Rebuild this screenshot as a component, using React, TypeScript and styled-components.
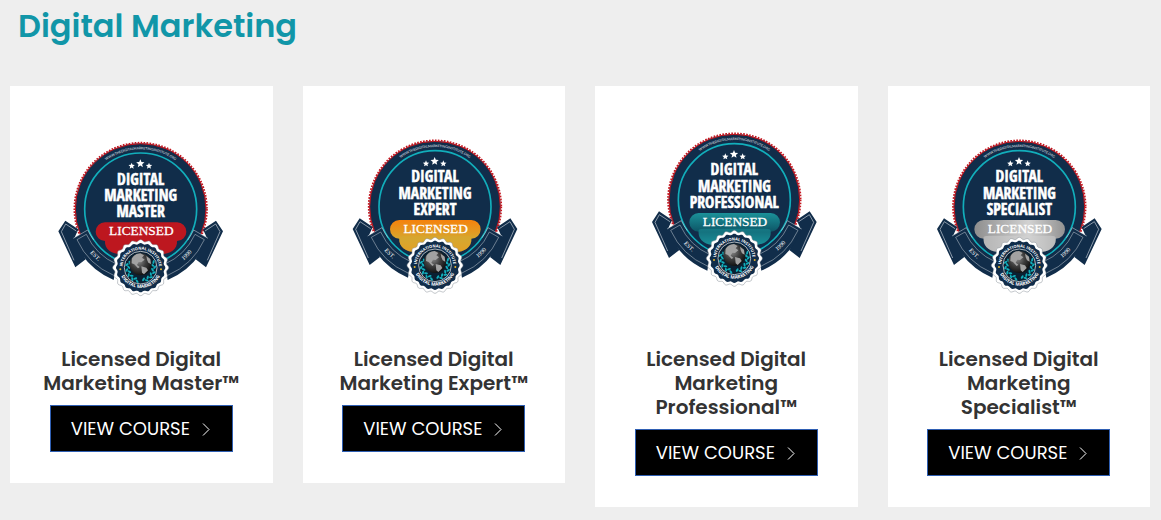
import React, { useId } from 'react';
import styled, { createGlobalStyle } from 'styled-components';

const GlobalStyle = createGlobalStyle`
  *, *::before, *::after { box-sizing: border-box; }
  body {
    margin: 0;
    background: #eeeeee;
    font-family: Poppins, Inter, sans-serif;
    color: #333333;
  }
`;

const Page = styled.main`
  padding: 6px 11px 13px 10px;
`;

const Heading = styled.h1`
  margin: 0 0 40px;
  padding: 0 8px;
  font-size: 32px;
  line-height: 40px;
  font-weight: 600;
  color: #1196a8;
`;

const CourseGrid = styled.div`
  display: grid;
  grid-template-columns: repeat(4, minmax(0, 1fr));
  align-items: start;
  gap: 30px;
`;

const Card = styled.article`
  display: flex;
  flex-direction: column;
  align-items: center;
  padding: 20px 20px 31px;
  background: #ffffff;
`;

const CardTitle = styled.h2`
  margin: 20px 0 10px;
  font-size: 20px;
  line-height: 24px;
  font-weight: 600;
  text-align: center;
`;

const CourseLink = styled.a`
  display: flex;
  align-items: center;
  justify-content: space-between;
  width: 183px;
  height: 47px;
  padding: 0 22px 0 20px;
  border: 1px solid #2f5fb3;
  background: #000000;
  color: #ffffff;
  font-size: 18px;
  line-height: 24px;
  white-space: nowrap;
  text-decoration: none;
`;

const BadgeArt = styled.svg`
  display: block;
  width: 222px;
  height: 221px;
`;

const NAVY = '#112d4a';
const TEAL = '#12aebb';

type Tone = 'red' | 'gold' | 'teal' | 'silver';

const tones: Record<Tone, [string, string, string]> = {
  red: ['#bd171f', '#bd171f', '#bd171f'],
  gold: ['#f5820c', '#d6a72f', '#f09a1c'],
  teal: ['#1b9199', '#0d5465', '#178e98'],
  silver: ['#8e8e8e', '#d2d2d2', '#929292'],
};

function scallop(cx: number, cy: number, r: number, depth: number, count: number) {
  const points: string[] = [];
  const steps = count * 8;
  for (let i = 0; i < steps; i += 1) {
    const a = (i / steps) * Math.PI * 2;
    const rr = r + depth * Math.cos(a * count);
    points.push(`${(cx + rr * Math.sin(a)).toFixed(1)} ${(cy - rr * Math.cos(a)).toFixed(1)}`);
  }
  return `M${points.join('L')}Z`;
}

function star(cx: number, cy: number, r: number) {
  return Array.from({ length: 10 }, (_, i) => {
    const rr = i % 2 ? r * 0.45 : r;
    const a = (i * Math.PI) / 5;
    return `${(cx + rr * Math.sin(a)).toFixed(1)},${(cy - rr * Math.cos(a)).toFixed(1)}`;
  }).join(' ');
}

const leaves = [20, 42, 64, 86, 108];

function Ribbon() {
  return (
    <g>
      <path d="M45 272 84 298 72 325 106 388 75 412 24 304Z" fill={NAVY} />
      <path d="M78 303 46 282 33 305 71 391" fill="none" stroke="#c9d0d9" strokeWidth="2" />
      <path d="M69 325 112 300A171 171 0 0 0 200 393L190 450A224 224 0 0 1 69 325Z" fill={NAVY} />
      <path d="M69 325 112 300A171 171 0 0 0 130 330" fill="none" stroke="#dfe4ea" strokeWidth="1.5" />
      <path d="M200 403A182 182 0 0 1 108 313L80 329A212 212 0 0 0 190 436" fill="none" stroke="#c9d0d9" strokeWidth="1.5" />
    </g>
  );
}

function Badge({ level, tone, shift }: { level: string; tone: Tone; shift: [number, number] }) {
  const id = useId();
  const [edge, mid, end] = tones[tone];
  return (
    <BadgeArt
      viewBox={`${-61 - shift[0]} ${-72 - shift[1]} 666 663`}
      role="img"
      aria-label={`Digital Marketing ${level} licensed badge`}
    >
      <defs>
        <linearGradient id={`${id}b`} x1="0" y1="0" x2={tone === 'silver' ? '1' : '0'} y2={tone === 'silver' ? '0' : '1'}>
          <stop offset="0" stopColor={edge} />
          <stop offset="0.6" stopColor={mid} />
          <stop offset="1" stopColor={end} />
        </linearGradient>
        <radialGradient id={`${id}g`} cx="0.4" cy="0.35" r="0.7">
          <stop offset="0" stopColor="#8c8c8c" />
          <stop offset="0.5" stopColor="#3d3d3d" />
          <stop offset="1" stopColor="#0c0c0c" />
        </radialGradient>
        <path id={`${id}u`} d="M92 237A179 179 0 0 1 450 237" />
        <path id={`${id}t`} d="M216 414A55 55 0 0 1 326 414" />
        <path id={`${id}m`} d="M206 409A65 65 0 0 0 336 409" />
        <path id={`${id}r`} d="M70 237A201 201 0 0 0 472 237" />
      </defs>

      <circle cx="271" cy="237" r="197" fill={NAVY} />
      <circle cx="271" cy="237" r="196" fill="none" stroke="#c4161f" strokeWidth="3" />
      <circle cx="271" cy="237" r="199" fill="none" stroke="#c4161f" strokeWidth="5" strokeDasharray="5 4" />
      <circle cx="271" cy="237" r="168" fill="none" stroke={TEAL} strokeWidth="5" />
      <text fontFamily="Lato, sans-serif" fontSize="10" fill="#e5eaf0" textAnchor="middle">
        <textPath href={`#${id}u`} startOffset="50%">WWW.THEDIGITALMARKETINGINSTITUTE.ORG</textPath>
      </text>

      <g fill="#ffffff">
        <polygon points={star(244, 108, 10)} />
        <polygon points={star(270, 101, 13)} />
        <polygon points={star(296, 108, 10)} />
      </g>
      <g
        fontFamily="'Open Sans Condensed', 'Open Sans', sans-serif"
        fontWeight="700"
        fontSize="47"
        fill="#ffffff"
        stroke="#ffffff"
        strokeWidth="1.5"
        textAnchor="middle"
      >
        <text x="271" y="164">DIGITAL</text>
        <text x="271" y="213">MARKETING</text>
        <text x="271" y="262">{level.toUpperCase()}</text>
      </g>

      <path
        d="M164 277H380A28 28 0 0 1 380 333C382 357 360 373 330 373H214C184 373 162 357 164 333A28 28 0 0 1 164 277Z"
        fill={`url(#${id}b)`}
      />
      {tone !== 'red' && <path d="M164 333Q160 324 180 324H365Q382 324 380 333C382 357 360 373 330 373H214C184 373 162 357 164 333Z" fill={tone === 'teal' ? edge : mid} opacity="0.5" />}
      <text x="273" y="316" fontFamily="'Liberation Serif', serif" fontSize="40" fill="#ffffff" stroke="#ffffff" strokeWidth="0.8" textAnchor="middle">
        LICENSED
      </text>

      <Ribbon />
      <g transform="translate(542 0) scale(-1 1)">
        <Ribbon />
      </g>
      <g fontFamily="'Liberation Serif', serif" fontSize="18" fill="#ffffff" textAnchor="middle">
        <text><textPath href={`#${id}r`} startOffset="25.5%">EST.</textPath></text>
        <text><textPath href={`#${id}r`} startOffset="75%">1990</textPath></text>
      </g>

      <path d={scallop(271, 413, 81, 3, 20)} fill="#ffffff" stroke="#858c94" strokeWidth="1.5" />
      <path d={scallop(271, 413, 72, 2, 20)} fill={NAVY} />
      <circle cx="271" cy="413" r="49" fill="#0a2032" stroke="#ffffff" strokeWidth="2" />
      <g fontFamily="'Open Sans', sans-serif" fontWeight="700" fill="#ffffff" textAnchor="middle">
        <text fontSize="12"><textPath href={`#${id}t`} startOffset="50%">INTERNATIONAL INSTITUTE</textPath></text>
        <text fontSize="14"><textPath href={`#${id}m`} startOffset="50%">DIGITAL MARKETING</textPath></text>
      </g>
      <circle cx="210" cy="418" r="3" fill="#e5b52c" />
      <circle cx="332" cy="418" r="3" fill="#e5b52c" />
      <g fill={TEAL}>
        {leaves.flatMap((a) => [a, -a]).map((a) => (
          <g key={a} transform={`translate(271 413) rotate(${180 + a})`}>
            <ellipse cx="-4" cy="-42" rx="6" ry="3" transform="rotate(35 -4 -42)" />
            <ellipse cx="4" cy="-36" rx="6" ry="3" transform="rotate(-35 4 -36)" />
          </g>
        ))}
      </g>
      <circle cx="271" cy="403" r="33" fill={`url(#${id}g)`} />
      <path
        d="M245 385Q252 371 270 370L281 376 275 383 283 389 273 397 265 396 260 405 268 411 263 415 252 403 244 400ZM273 409 288 413 293 421 281 433 275 428ZM288 378 300 387 302 402 294 398 290 389Z"
        fill="#a2a2a2"
      />
    </BadgeArt>
  );
}

function Chevron() {
  return (
    <svg width="8" height="14" viewBox="0 0 8 14" fill="none" stroke="currentColor" aria-hidden="true">
      <path d="M1 1.5 7 7.5 1 13.5" />
    </svg>
  );
}

const courses: { level: string; tone: Tone; shift: [number, number] }[] = [
  { level: 'Master', tone: 'red', shift: [0, 0] },
  { level: 'Expert', tone: 'gold', shift: [4, -7] },
  { level: 'Professional', tone: 'teal', shift: [26, -28] },
  { level: 'Specialist', tone: 'silver', shift: [2, -7] },
];

export default function App() {
  return (
    <>
      <GlobalStyle />
      <Page>
        <Heading>Digital Marketing</Heading>
        <CourseGrid>
          {courses.map((course) => (
            <Card key={course.level}>
              <Badge {...course} />
              <CardTitle>Licensed Digital Marketing {course.level}™</CardTitle>
              <CourseLink href="#">
                VIEW COURSE
                <Chevron />
              </CourseLink>
            </Card>
          ))}
        </CourseGrid>
      </Page>
    </>
  );
}
